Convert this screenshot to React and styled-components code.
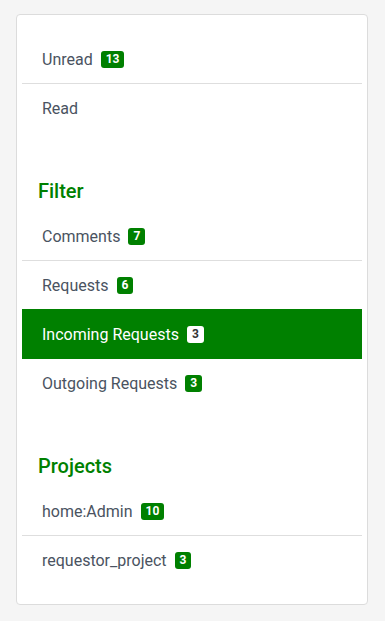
import React from "react";
import styled, { createGlobalStyle } from "styled-components";

const Global = createGlobalStyle`
  html, body { margin: 0; padding: 0; background: #f5f5f5; }
  body { font-family: Roboto, "Liberation Sans", sans-serif; }
`;

const Page = styled.div`
  padding: 14px 17px 16px 16px;
`;

const Card = styled.div`
  background: #fff;
  border: 1px solid #dcdcdc;
  border-radius: 4px;
  padding: 20px 5px 19px;
`;

const Heading = styled.h3`
  margin: 46px 0 9px 16px;
  font-size: 20px;
  line-height: 24px;
  font-weight: 500;
  color: #008000;
`;

const List = styled.div`
  display: flex;
  flex-direction: column;
`;

const Row = styled.a`
  box-sizing: border-box;
  display: flex;
  align-items: center;
  height: ${(p) => (p.$active ? "50px" : "49px")};
  padding: 0 20px;
  margin-top: ${(p) => (p.$active ? "-1px" : "0")};
  font-size: 16px;
  color: ${(p) => (p.$active ? "#fff" : "#4a5361")};
  background: ${(p) => (p.$active ? "#008000" : "transparent")};
  border-top: ${(p) => (p.$active ? "1px solid #008000" : "none")};
  border-bottom: 1px solid
    ${(p) => (p.$active ? "#008000" : p.$divider ? "#dedede" : "transparent")};
  text-decoration: none;
  cursor: pointer;
`;

const Badge = styled.span`
  margin-left: 8px;
  display: inline-block;
  height: 17px;
  line-height: 17px;
  padding: 0 5px;
  border-radius: 3px;
  font-size: 12px;
  font-weight: 700;
  background: ${(p) => (p.$active ? "#fff" : "#008000")};
  color: ${(p) => (p.$active ? "#333" : "#fff")};
`;

const Item = ({ label, count, active, divider }) => (
  <Row $active={active} $divider={divider}>
    {label}
    {count != null && <Badge $active={active}>{count}</Badge>}
  </Row>
);

export default function App() {
  return (
    <>
      <Global />
      <Page>
        <Card>
          <List>
            <Item label="Unread" count={13} divider />
            <Item label="Read" />
          </List>
          <Heading>Filter</Heading>
          <List>
            <Item label="Comments" count={7} divider />
            <Item label="Requests" count={6} />
            <Item label="Incoming Requests" count={3} active />
            <Item label="Outgoing Requests" count={3} />
          </List>
          <Heading>Projects</Heading>
          <List>
            <Item label="home:Admin" count={10} divider />
            <Item label="requestor_project" count={3} />
          </List>
        </Card>
      </Page>
    </>
  );
}
